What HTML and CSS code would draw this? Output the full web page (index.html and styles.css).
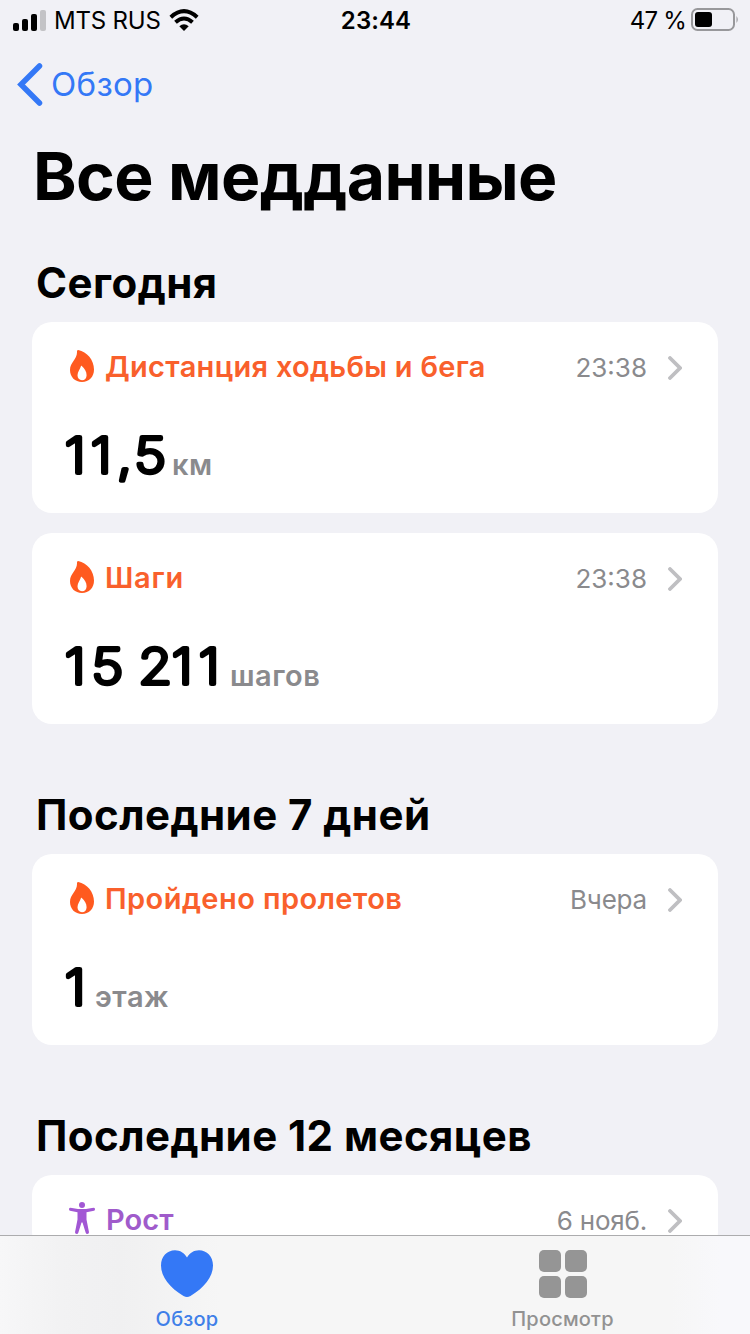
FILE: index.html
```html
<!DOCTYPE html>
<html lang="ru">
<head>
  <meta charset="UTF-8">
  <title>Все медданные</title>
  <link rel="stylesheet" href="styles.css">
</head>
<body>

<svg class="defs" width="0" height="0">
  <symbol id="flame" viewBox="0 0 24 32">
    <path fill-rule="evenodd" d="M8.200.1C17 2 24 10 24 19.500 24 27 19 32 12 32S0 27 0 20C0 12.500 7 9 7 2.500 7 1.200 6.900.2 8.200.1ZM11 15.900C10.200 19 7.500 21.500 7.500 25.300 7.500 28.300 9.300 30.200 12 30.200S16.600 28.300 16.600 25.200C16.600 21.500 14.600 18.300 11.800 15.900 11.400 15.600 11.100 15.600 11 15.900Z"/>
  </symbol>
  <symbol id="chevron" viewBox="0 0 14 24">
    <path d="M2 2 12 12 2 22" fill="none" stroke="currentColor" stroke-width="3.800" stroke-linecap="round" stroke-linejoin="miter"/>
  </symbol>
</svg>

<div class="status">
  <div class="status-left">
    <svg width="33" height="21" viewBox="0 0 33 21">
      <rect x="0" y="13" width="6" height="8" rx="2"/>
      <rect x="9" y="9" width="6" height="12" rx="2"/>
      <rect x="18" y="4" width="6" height="17" rx="2"/>
      <rect x="27" y="0" width="6" height="21" rx="2" fill="#c3c3c6"/>
    </svg>
    <span class="carrier">MTS RUS</span>
    <svg class="wifi" width="30" height="22" viewBox="0 0 30 22">
      <g fill="none" stroke="#000" stroke-width="4">
        <path d="M1.800 8.200Q15-3.800 28.200 8.200"/>
        <path d="M6.500 13.300Q15 5.700 23.500 13.300"/>
      </g>
      <path d="M10.300 17.300Q15 13.400 19.700 17.300L15 22Z"/>
    </svg>
  </div>
  <div class="clock">23:44</div>
  <div class="status-right">
    <span class="percent">47 %</span>
    <svg width="48" height="24" viewBox="0 0 48 24">
      <rect x="1" y="1" width="42" height="21" rx="5.500" fill="none" stroke="#98989b" stroke-width="2"/>
      <rect x="4" y="4" width="17" height="15" rx="3"/>
      <path d="M45.500 8Q48 11.500 45.500 15Z" fill="#98989b"/>
    </svg>
  </div>
</div>

<div class="back">
  <svg width="26" height="43" viewBox="0 0 26 43"><path d="M22.500 3 4 21.500 22.500 40" fill="none" stroke="#3478f6" stroke-width="5.500" stroke-linecap="round"/></svg>
  <span>Обзор</span>
</div>

<h1>Все медданные</h1>

<section>
  <h2>Сегодня</h2>
  <div class="card">
    <div class="card-head">
      <svg class="flame"><use href="#flame"/></svg>
      <span class="name n-dist">Дистанция ходьбы и бега</span>
      <span class="time">23:38</span>
      <svg class="chevron"><use href="#chevron"/></svg>
    </div>
    <div class="value">
      <svg class="num" width="102" height="68"><text transform="scale(1.12 1)" x="0.6 24 47.3 62.8" y="52.500">11,5</text></svg>
      <span class="unit">км</span>
    </div>
  </div>
  <div class="card">
    <div class="card-head">
      <svg class="flame"><use href="#flame"/></svg>
      <span class="name n-steps">Шаги</span>
      <span class="time">23:38</span>
      <svg class="chevron"><use href="#chevron"/></svg>
    </div>
    <div class="value">
      <svg class="num" width="160" height="68"><text transform="scale(1.12 1)" x="0.6 24.5 54 66.3 96.3 120.3" y="52.500">15 211</text></svg>
      <span class="unit">шагов</span>
    </div>
  </div>
</section>

<section>
  <h2>Последние 7 дней</h2>
  <div class="card">
    <div class="card-head">
      <svg class="flame"><use href="#flame"/></svg>
      <span class="name n-floors">Пройдено пролетов</span>
      <span class="time t-text">Вчера</span>
      <svg class="chevron"><use href="#chevron"/></svg>
    </div>
    <div class="value">
      <svg class="num" width="25" height="68"><text transform="scale(1.12 1)" x="0.6" y="52.500">1</text></svg>
      <span class="unit">этаж</span>
    </div>
  </div>
</section>

<section>
  <h2>Последние 12 месяцев</h2>
  <div class="card">
    <div class="card-head">
      <svg class="person" width="26" height="32" viewBox="0 0 26 32">
        <circle cx="13" cy="3" r="3"/>
        <path d="M1.500 5.800 9 7H17L24.500 5.800Q26 5.800 26 7.200 26 8.500 25 8.800L17.500 10.300V17.500L20 30.200Q20 32 18.300 32 17 32 16.700 30.800L13.500 20.500H12.500L9.300 30.800Q9 32 7.700 32 6 32 6 30.200L8.500 17.500V10.300L1 8.800Q0 8.500 0 7.200 0 5.800 1.500 5.800Z"/>
      </svg>
      <span class="name n-height">Рост</span>
      <span class="time t-text">6 нояб.</span>
      <svg class="chevron"><use href="#chevron"/></svg>
    </div>
  </div>
</section>

<div class="tabbar">
  <div class="tab active">
    <svg width="52" height="48" viewBox="0 0 52 48"><path d="M26 7.500C28.500 3 33 .2 38 .2 46 .2 52 6.500 52 15.500 52 27 43 38 29.500 46 27 47.400 25 47.400 22.500 46 9 38 0 27 0 15.500 0 6.500 6 .2 14 .2 19 .2 23.500 3 26 7.500Z"/></svg>
    <span>Обзор</span>
  </div>
  <div class="tab">
    <svg width="48" height="48" viewBox="0 0 48 48">
      <rect width="22" height="22" rx="5"/>
      <rect x="26" width="22" height="22" rx="5"/>
      <rect y="26" width="22" height="22" rx="5"/>
      <rect x="26" y="26" width="22" height="22" rx="5"/>
    </svg>
    <span>Просмотр</span>
  </div>
</div>

</body>
</html>
```
FILE: styles.css
```css
* {
  box-sizing: border-box;
}

html {
  height: 1334px;
  overflow: hidden;
}

body {
  margin: 0;
  height: 1334px;
  overflow: hidden;
  font-family: Inter, "Liberation Sans", sans-serif;
  background-color: #f1f1f6;
  color: #000;
}

svg {
  display: block;
  flex: none;
}

.defs {
  position: absolute;
}

.status {
  display: grid;
  grid-template-columns: 1fr auto 1fr;
  height: 40px;
  padding: 0 11px 0 13px;
  align-items: center;
  font-size: 24px;
}

.status-left, .status-right {
  display: flex;
  align-items: center;
}

.status-right {
  justify-content: flex-end;
  gap: 5px;
}

.carrier {
  margin-left: 8px;
  letter-spacing: -0.2px;
}

.wifi {
  margin-left: 8px;
}

.percent {
  letter-spacing: -0.8px;
}

.clock {
  font-weight: 600;
  letter-spacing: 0.1px;
}

.back {
  display: flex;
  align-items: center;
  height: 90px;
  padding: 0 0 2px 17px;
  gap: 8px;
  font-size: 33px;
  letter-spacing: 0.3px;
  color: #3478f6;
}

h1, h2 {
  margin: 0;
  font-weight: 700;
}

h1 {
  height: 110px;
  padding-left: 33px;
  font-size: 66px;
  line-height: 92px;
  letter-spacing: -0.6px;
  white-space: nowrap;
}

h2 {
  height: 82px;
  padding-left: 36px;
  font-size: 42px;
  line-height: 86px;
  letter-spacing: 0.45px;
  white-space: nowrap;
}

section {
  margin-bottom: 48px;
}

section:last-of-type {
  margin-bottom: 0;
}

.card {
  height: 191px;
  margin: 0 32px 20px;
  padding: 25px 36px 0 38px;
  background-color: #fff;
  border-radius: 20px;
}

section .card:last-child {
  margin-bottom: 0;
}

section:last-of-type .card {
  height: 77px;
}

.card-head {
  display: flex;
  align-items: center;
  height: 38px;
}

.flame {
  width: 24px;
  height: 32px;
  fill: #ff5a1f;
}

.person {
  margin: -2px 0 0 -1px;
  fill: #a257d4;
}

.name {
  margin-left: 11px;
  font-size: 29px;
  font-weight: 600;
  letter-spacing: 0.3px;
  color: #f9602c;
}

.n-floors {
  letter-spacing: 0.45px;
}

.n-steps {
  letter-spacing: 0.7px;
}

.n-height {
  letter-spacing: 0.1px;
  color: #a05bcb;
}

.time {
  margin: 2px 0 0 auto;
  font-size: 26px;
  color: #8a8a8d;
}

.t-text {
  letter-spacing: -0.2px;
}

.chevron {
  width: 14px;
  height: 24px;
  margin: 3px 0 0 21px;
  color: #bfbfc2;
}

.value {
  display: flex;
  margin: 36px 0 0 -6px;
  line-height: 68px;
}

/* thin digits with a round stroke, so the ends come out rounded */
.num {
  overflow: visible;
  font-size: 49px;
  font-weight: 200;
  stroke: #000;
  stroke-width: 4.2px;
  stroke-linejoin: round;
}

.unit {
  margin: 10px 0 0 6px;
  font-size: 29px;
  font-weight: 600;
  letter-spacing: 0.5px;
  color: #8a8a8d;
}

.tabbar {
  position: fixed;
  left: 0;
  right: 0;
  bottom: 0;
  display: grid;
  grid-template-columns: 1fr 1fr;
  height: 99px;
  border-top: 1px solid #acacae;
  background: linear-gradient(90deg, #f7f7f8 0, #f2f2f3 60px, #f0f0f1 120px, #f6f6f6 220px, #f6f6f6 670px, #f8f8fb 720px);
}

.tab {
  display: flex;
  flex-direction: column;
  align-items: center;
  padding-top: 14px;
  font-size: 20px;
  font-weight: 500;
  line-height: 24px;
  letter-spacing: 0.2px;
  color: #929292;
  fill: #959595;
}

.tab span {
  margin-top: 9px;
}

.active {
  padding-right: 1px;
  color: #3f7fe8;
  fill: #3478f6;
}
```
